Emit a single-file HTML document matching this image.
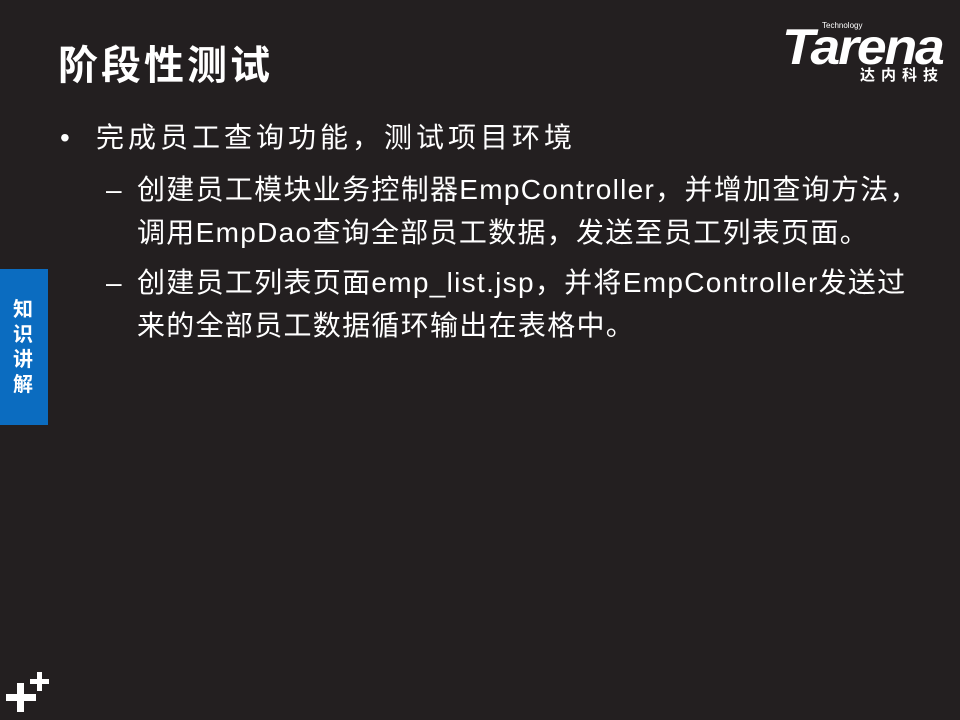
<!DOCTYPE html>
<html><head><meta charset="utf-8"><style>
body{margin:0;width:960px;height:720px;background:#231f20;position:relative;overflow:hidden;font-family:"Liberation Sans","Noto Sans CJK SC",sans-serif;color:#fff}
.a{position:absolute;white-space:nowrap}
.t{left:58px;top:41px;font-size:40px;font-weight:bold;letter-spacing:3px;line-height:50px}
.l{font-size:28px;line-height:43px;letter-spacing:1.3px}
</style></head><body>
<div class="a t">阶段性测试</div>
<div class="a" style="left:782px;top:20px;width:170px;height:62px">
<div class="a" style="left:0;top:2px;font-size:50px;font-weight:bold;font-style:italic;letter-spacing:-2px;line-height:50px;transform:scaleX(1.07);transform-origin:0 0">Tarena</div>
<div class="a" style="left:40px;top:1px;font-size:8px">Technology</div>
<div class="a" style="left:78px;top:44px;font-size:15px;font-weight:bold;letter-spacing:6px">达内科技</div>
</div>
<div class="a" style="left:0;top:269px;width:48px;height:156px;background:#0b6cc0"></div>
<div class="a" style="left:13px;top:298px;font-size:20px;font-weight:bold;line-height:25px;width:22px;white-space:normal">知识讲解</div>
<div class="a l" style="left:60px;top:116px">•</div>
<div class="a l" style="left:96px;top:116px;letter-spacing:4px">完成员工查询功能，测试项目环境</div>
<div class="a l" style="left:106px;top:168px">–</div>
<div class="a l" style="left:137px;top:168px">创建员工模块业务控制器EmpController，并增加查询方法，<br>调用EmpDao查询全部员工数据，发送至员工列表页面。</div>
<div class="a l" style="left:106px;top:261px">–</div>
<div class="a l" style="left:137px;top:261px">创建员工列表页面emp_list.jsp，并将EmpController发送过<br>来的全部员工数据循环输出在表格中。</div>
<svg class="a" style="left:0;top:660px;display:block" width="60" height="60"><path fill="#fff" d="M17 23h7v11h12v7H24v11h-7V41H6v-7h11z M37 12h5v7h7v5h-7v7h-5v-7h-7v-5h7z"/></svg>
</body></html>
